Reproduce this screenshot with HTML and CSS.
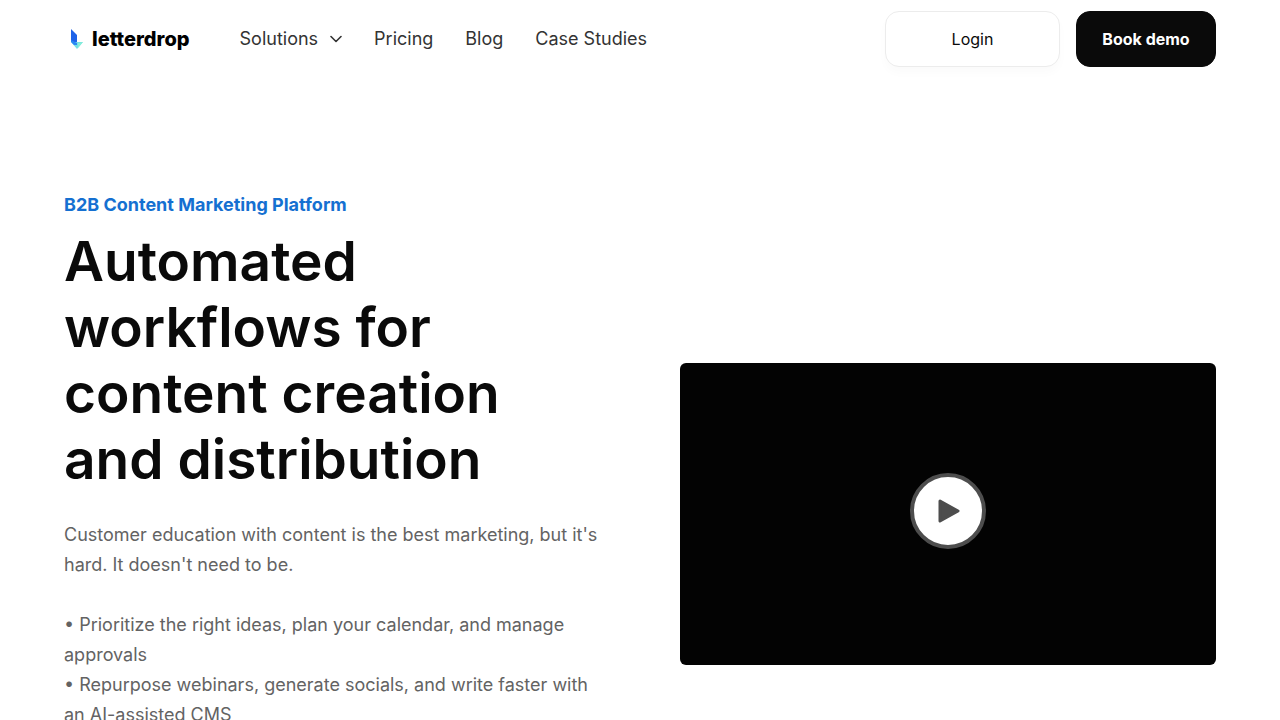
FILE: index.html
```html
<!DOCTYPE html>
<html lang="en">
<head>
    <meta charset="UTF-8">
    <meta name="viewport" content="width=device-width, initial-scale=1.0">
    <title>Letterdrop | B2B Content Marketing Platform</title>
    <link rel="stylesheet" href="styles.css">
</head>
<body>
    <header class="navbar">
        <a href="#" class="brand">
            <svg class="brand-mark" width="14" height="22" viewBox="0 0 14 22" aria-hidden="true">
                <path d="M1 1 L7 7 V14 L1 14 Z" fill="#1f63e8"/>
                <path d="M1 14 H13 L7 21 Z" fill="#74dfe6"/>
                <path d="M1 12 L7 15 V17 L4 17 L1 14 Z" fill="#2b86f4"/>
                <path d="M8 15 L13 14 L8 20 Z" fill="#86efd8"/>
            </svg>
            <span class="brand-name">letterdrop</span>
        </a>
        <nav class="nav-menu">
            <button type="button" class="nav-link nav-toggle">
                Solutions
                <svg width="12" height="8" viewBox="0 0 12 8" fill="none" stroke="currentColor" stroke-width="1.6" stroke-linecap="round" stroke-linejoin="round" aria-hidden="true">
                    <path d="M1 1.500 L6 6.500 L11 1.500"/>
                </svg>
            </button>
            <a href="#" class="nav-link">Pricing</a>
            <a href="#" class="nav-link">Blog</a>
            <a href="#" class="nav-link">Case Studies</a>
        </nav>
        <div class="nav-actions">
            <a href="#" class="btn btn-light">Login</a>
            <a href="#" class="btn btn-dark">Book demo</a>
        </div>
    </header>

    <main class="hero">
        <div class="hero-text">
            <p class="eyebrow">B2B Content Marketing Platform</p>
            <h1>Automated<br>workflows for<br>content creation<br>and distribution</h1>
            <p class="lead">Customer education with content is the best marketing, but it's<br>hard. It doesn't need to be.<br><br>• Prioritize the right ideas, plan your calendar, and manage<br>approvals<br>• Repurpose webinars, generate socials, and write faster with<br>an AI-assisted CMS</p>
        </div>
        <div class="video">
            <button type="button" class="play" aria-label="Play video">
                <svg width="22" height="24" viewBox="0 0 22 24" aria-hidden="true">
                    <path d="M2 2 L20 12 L2 22 Z" fill="#4d4d4d" stroke="#4d4d4d" stroke-width="3" stroke-linejoin="round"/>
                </svg>
            </button>
        </div>
    </main>
</body>
</html>
```
FILE: styles.css
```css
* {
    box-sizing: border-box;
}
body {
    margin: 0;
    font-family: Inter, sans-serif;
    color: #0a0a0a;
    background: #fff;
}
a {
    color: inherit;
    text-decoration: none;
}
.navbar {
    display: flex;
    align-items: center;
    padding: 11px 64px;
}
.brand {
    display: flex;
    align-items: center;
    gap: 8px;
    padding-left: 6px;
    margin-right: 50px;
}
.brand-name {
    font-size: 20px;
    line-height: 24px;
    font-weight: 800;
    color: #000;
}
.nav-menu {
    display: flex;
    align-items: center;
    gap: 32px;
}
.nav-link {
    font-size: 18px;
    line-height: 24px;
    font-weight: 400;
    color: #333;
}
.nav-toggle {
    display: flex;
    align-items: center;
    gap: 12px;
    padding: 0;
    border: none;
    background: none;
    font-family: inherit;
    cursor: pointer;
}
.nav-actions {
    display: flex;
    gap: 16px;
    margin-left: auto;
}
.btn {
    padding: 16px 24px;
    border: 1px solid #0a0a0a;
    border-radius: 14px;
    font-size: 16px;
    line-height: 22px;
    text-align: center;
}
.btn-light {
    min-width: 175px;
    border-color: #ececec;
    background: #fff;
    box-shadow: 0 6px 10px rgba(0, 0, 0, 0.02);
}
.btn-dark {
    min-width: 140px;
    background: #0a0a0a;
    color: #fff;
    font-weight: 700;
}
.hero {
    display: grid;
    grid-template-columns: 1fr 1fr;
    gap: 80px;
    align-items: center;
    padding: 112px 64px 0;
}
.hero-text {
    padding-bottom: 108px;
}
.eyebrow {
    margin: 0 0 8px;
    font-size: 18px;
    line-height: 30px;
    font-weight: 700;
    color: #1570d1;
}
h1 {
    margin: 0 0 28px;
    font-size: 55px;
    line-height: 66px;
    font-weight: 600;
}
.lead {
    margin: 0;
    font-size: 18px;
    line-height: 30px;
    color: #636363;
}
.video {
    display: flex;
    align-items: center;
    justify-content: center;
    aspect-ratio: 16 / 9;
    padding-bottom: 6px;
    border-radius: 6px;
    background: #030303;
}
.play {
    display: flex;
    align-items: center;
    justify-content: center;
    width: 76px;
    height: 76px;
    padding: 0 0 0 2px;
    border: 4px solid #4d4d4d;
    border-radius: 50%;
    background: #fff;
    cursor: pointer;
}
```
